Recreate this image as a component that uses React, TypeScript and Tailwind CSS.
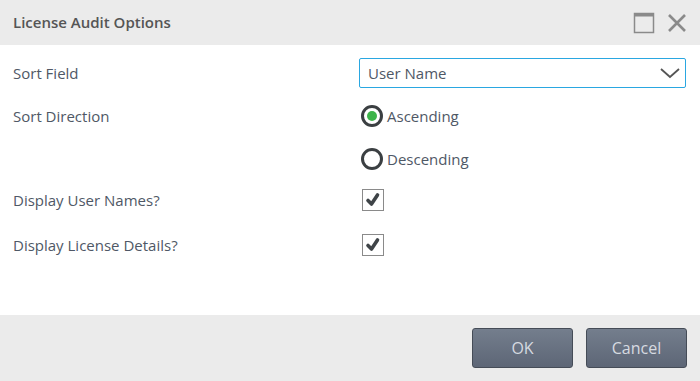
import React from "react";

export default function App() {
  return (
    <div className="w-[700px] h-[381px] flex flex-col bg-white text-[#4f5866]" style={{ fontFamily: '"Open Sans", sans-serif' }}>
      <div className="h-[45px] shrink-0 bg-[#ebebeb] flex items-center pl-[13px] pr-[12px]">
        <div className="flex-1 text-[15px] font-semibold text-[#555]">License Audit Options</div>
        <svg width="22" height="22" viewBox="0 0 22 22" className="mr-[11px]">
          <rect x="1.5" y="1.5" width="19" height="19" fill="none" stroke="#8a8a8a" strokeWidth="1.5" />
          <rect x="1" y="1" width="20" height="3.5" fill="#8a8a8a" />
        </svg>
        <svg width="22" height="22" viewBox="0 0 22 22">
          <path d="M3 3 L19 19 M19 3 L3 19" stroke="#8a8a8a" strokeWidth="2.6" />
        </svg>
      </div>
      <div className="flex-1 flex flex-col pt-[13px] pl-[13px] pr-[14px] text-[15px]">
        <div className="flex items-center h-[30px]">
          <div className="w-[346px]">Sort Field</div>
          <div className="flex-1 h-[30px] border border-[#2aa7e1] rounded-[2px] flex items-center pl-[8px] pr-[4px]">
            <span className="flex-1 text-[#4f5866]">User Name</span>
            <svg width="22" height="14" viewBox="0 0 22 14">
              <path d="M2 3 L11 11 L20 3" fill="none" stroke="#555" strokeWidth="1.8" />
            </svg>
          </div>
        </div>
        <div className="flex items-center h-[22px] mt-[17px]">
          <div className="w-[348px]">Sort Direction</div>
          <div className="flex items-center">
            <div className="w-[22px] h-[22px] rounded-full border-[3px] border-[#3b3f42] flex items-center justify-center">
              <div className="w-[10px] h-[10px] rounded-full bg-[#3db44a]" />
            </div>
            <span className="ml-[4px]">Ascending</span>
          </div>
        </div>
        <div className="flex items-center h-[22px] mt-[21px]">
          <div className="w-[348px]" />
          <div className="flex items-center">
            <div className="w-[22px] h-[22px] rounded-full border-[3px] border-[#3b3f42]" />
            <span className="ml-[4px]">Descending</span>
          </div>
        </div>
        <div className="flex items-center h-[22px] mt-[19px]">
          <div className="w-[349px]">Display User Names?</div>
          <Check />
        </div>
        <div className="flex items-center h-[22px] mt-[23px]">
          <div className="w-[349px]">Display License Details?</div>
          <Check />
        </div>
      </div>
      <div className="h-[66px] shrink-0 bg-[#ebebeb] flex items-center justify-end gap-[13px] pr-[13px] pb-[1px]">
        <Btn label="OK" />
        <Btn label="Cancel" />
      </div>
    </div>
  );
}

function Check() {
  return (
    <div className="w-[22px] h-[22px] border border-[#8a8a8a] bg-white flex items-center justify-center">
      <svg width="16" height="16" viewBox="0 0 16 16">
        <path d="M3 8.5 L6.5 12 L12.5 3" fill="none" stroke="#3f4448" strokeWidth="3.6" strokeLinejoin="round" strokeLinecap="round" />
      </svg>
    </div>
  );
}

function Btn({ label }: { label: string }) {
  return (
    <div className="w-[101px] h-[40px] rounded-[3px] border border-[#454c57] bg-gradient-to-b from-[#747e8d] to-[#5d6676] flex items-center justify-center text-[16px] text-[#d6dae0]">
      {label}
    </div>
  );
}
